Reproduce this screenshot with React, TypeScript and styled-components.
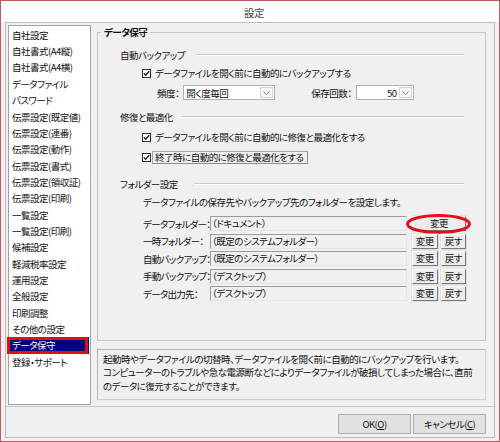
import React from "react";
import styled, { createGlobalStyle } from "styled-components";

const GlobalStyle = createGlobalStyle`
  html, body { margin: 0; padding: 0; background: #fff; }
  body {
    font-family: "Noto Sans CJK JP", "Noto Sans", sans-serif;
    font-size: 9.5px;
    letter-spacing: -0.5px;
    color: #111;
    font-feature-settings: "palt";
  }
  * { box-sizing: border-box; }
`;

const menuItems = [
  "自社設定",
  "自社書式(A4縦)",
  "自社書式(A4横)",
  "データファイル",
  "パスワード",
  "伝票設定(既定値)",
  "伝票設定(連番)",
  "伝票設定(動作)",
  "伝票設定(書式)",
  "伝票設定(領収証)",
  "伝票設定(印刷)",
  "一覧設定",
  "一覧設定(印刷)",
  "候補設定",
  "軽減税率設定",
  "運用設定",
  "全般設定",
  "印刷調整",
  "その他の設定",
  "データ保守",
  "登録・サポート",
];
const SELECTED = 19;

const folders = [
  { label: "データフォルダー：", value: "（ドキュメント）", reset: false },
  { label: "一時フォルダー：", value: "（既定のシステムフォルダー）", reset: true },
  { label: "自動バックアップ：", value: "（既定のシステムフォルダー）", reset: true },
  { label: "手動バックアップ：", value: "（デスクトップ）", reset: true },
  { label: "データ出力先：", value: "（デスクトップ）", reset: true },
];

const Check = () => (
  <CheckBox>
    <svg width="7" height="7" viewBox="0 0 7 7">
      <polyline points="0.8,3.4 2.6,5.3 6.2,1.2" fill="none" stroke="#1a1a1a" strokeWidth="1.3" />
    </svg>
  </CheckBox>
);

const Combo = ({ value, width, right }: { value: string; width: number; right?: boolean }) => (
  <ComboBox style={{ width }}>
    <ComboText $right={right}>{value}</ComboText>
    <ComboArrow>
      <svg width="7" height="4" viewBox="0 0 7 4">
        <polyline points="0.5,0.5 3.5,3.3 6.5,0.5" fill="none" stroke="#6f7d90" strokeWidth="1" />
      </svg>
    </ComboArrow>
  </ComboBox>
);

export default function App() {
  return (
    <>
      <GlobalStyle />
      <Window>
        <TitleBar>設定</TitleBar>
        <Body>
          <Frame>
            <Upper>
              <MenuList>
                {menuItems.map((t, i) => (
                  <MenuItem key={t} $selected={i === SELECTED}>
                    {t}
                    {i === SELECTED && <MarkRect />}
                  </MenuItem>
                ))}
              </MenuList>
              <RightPane>
                <Group>
                  <Legend>データ保守</Legend>
                  <SectionHead $mt={9}>
                    自動バックアップ
                    <Rule $gap={11} />
                  </SectionHead>
                  <CheckRow $mt={4}>
                    <Check />
                    <span>データファイルを開く前に自動的にバックアップする</span>
                  </CheckRow>
                  <ComboRow>
                    <ComboLabel>頻度：</ComboLabel>
                    <Combo value="開く度毎回" width={92} />
                    <ComboLabel $ml={36}>保存回数：</ComboLabel>
                    <Combo value="50" width={58} right />
                  </ComboRow>
                  <SectionHead $mt={10}>
                    修復と最適化
                    <Rule $gap={8} />
                  </SectionHead>
                  <CheckRow $mt={6}>
                    <Check />
                    <span>データファイルを開く前に自動的に修復と最適化をする</span>
                  </CheckRow>
                  <CheckRow $mt={6}>
                    <Check />
                    <FocusText>終了時に自動的に修復と最適化をする</FocusText>
                  </CheckRow>
                  <SectionHead $mt={13}>
                    フォルダー設定
                    <Rule $gap={16} />
                  </SectionHead>
                  <FolderNote>データファイルの保存先やバックアップ先のフォルダーを設定します。</FolderNote>
                  <FolderList>
                    {folders.map((f) => (
                      <FolderRow key={f.label}>
                        <FolderLabel>{f.label}</FolderLabel>
                        <PathField>{f.value}</PathField>
                        {f.reset ? (
                          <SmallButtons>
                            <SmallButton>変更</SmallButton>
                            <SmallButton>戻す</SmallButton>
                          </SmallButtons>
                        ) : (
                          <SmallButtons>
                            <SmallButton $wide>
                              変更
                              <MarkEllipse width="67" height="22" viewBox="0 0 67 22">
                                <ellipse cx="33.5" cy="11" rx="31" ry="8.5" fill="none" stroke="#e3101c" strokeWidth="3" />
                              </MarkEllipse>
                            </SmallButton>
                          </SmallButtons>
                        )}
                      </FolderRow>
                    ))}
                  </FolderList>
                </Group>
                <InfoBox>
                  <div>起動時やデータファイルの切替時、データファイルを開く前に自動的にバックアップを行います。</div>
                  <div>コンピューターのトラブルや急な電源断などによりデータファイルが破損してしまった場合に、直前</div>
                  <div>のデータに復元することができます。</div>
                </InfoBox>
              </RightPane>
            </Upper>
            <ButtonBar>
              <DialogButton>
                OK(<u>O</u>)
              </DialogButton>
              <DialogButton>
                キャンセル(<u>C</u>)
              </DialogButton>
            </ButtonBar>
          </Frame>
        </Body>
      </Window>
    </>
  );
}

const Window = styled.div`
  width: 500px;
  height: 442px;
  border: 1px solid #c4565d;
  display: flex;
  flex-direction: column;
  background: #f0f0f0;
  overflow: hidden;
`;

const TitleBar = styled.div`
  height: 21px;
  background: #fff;
  display: flex;
  align-items: center;
  justify-content: center;
  padding: 1px 0 0 8px;
  font-size: 10.5px;
  color: #444;
`;

const Body = styled.div`
  flex: 1;
  display: flex;
  padding: 0 4px 3px 4px;
  min-height: 0;
`;

const Frame = styled.div`
  flex: 1;
  min-width: 0;
  display: flex;
  flex-direction: column;
  border: 1px solid #bcbcbc;
`;

const Upper = styled.div`
  height: 384px;
  display: flex;
  padding: 2px 8px 0 2px;
  border-bottom: 1px solid #c6c6c6;
`;

const MenuList = styled.div`
  width: 83px;
  flex: none;
  height: 380px;
  background: #fff;
  border: 1px solid #a2a2a2;
  padding-top: 0.8px;
`;

const MenuItem = styled.div<{ $selected?: boolean }>`
  position: relative;
  height: 16.35px;
  line-height: 16.35px;
  padding-left: 3px;
  margin-right: 1px;
  white-space: nowrap;
  background: ${(p) => (p.$selected ? "#000080" : "transparent")};
  color: ${(p) => (p.$selected ? "#fff" : "#111")};
`;

const MarkRect = styled.span`
  position: absolute;
  left: -2px;
  right: 1px;
  top: 0;
  bottom: 0;
  border: 3px solid #ea0a16;
`;

const RightPane = styled.div`
  flex: 1;
  min-width: 0;
  margin-left: 6px;
  display: flex;
  flex-direction: column;
`;

const Group = styled.fieldset`
  margin: 0;
  padding: 0;
  min-width: 0;
  height: 316px;
  border: 1px solid #c6c6c6;
  display: flex;
  flex-direction: column;
`;

const Legend = styled.legend`
  margin-left: 3px;
  padding: 0 3px;
  font-weight: bold;
  line-height: 14px;
`;

const SectionHead = styled.div<{ $mt: number }>`
  display: flex;
  align-items: center;
  height: 14px;
  margin-top: ${(p) => p.$mt}px;
  padding: 0 21px 0 22px;
  white-space: nowrap;
`;

const Rule = styled.div<{ $gap: number }>`
  flex: 1;
  height: 2px;
  margin-left: ${(p) => p.$gap}px;
  border-top: 1px solid #c9c9c9;
  border-bottom: 1px solid #fff;
`;

const CheckRow = styled.div<{ $mt: number }>`
  display: flex;
  align-items: center;
  gap: 4px;
  height: 14px;
  margin-top: ${(p) => p.$mt}px;
  padding-left: 44px;
  white-space: nowrap;
`;

const CheckBox = styled.span`
  width: 9px;
  height: 9px;
  flex: none;
  border: 1px solid #333;
  background: #fff;
  display: flex;
  align-items: center;
  justify-content: center;
`;

const FocusText = styled.span`
  height: 13px;
  line-height: 11px;
  margin-left: -3px;
  padding: 0 3px 0 2px;
  border: 1px solid #8c8c8c;
  border-top-color: #a8a8a8;
  border-left-color: #a8a8a8;
`;

const ComboRow = styled.div`
  display: flex;
  align-items: center;
  height: 15px;
  margin-top: 5px;
  padding-left: 59px;
  white-space: nowrap;
`;

const ComboLabel = styled.span<{ $ml?: number }>`
  margin-left: ${(p) => p.$ml ?? 0}px;
  margin-right: 4px;
`;

const ComboBox = styled.div`
  height: 15px;
  display: flex;
  align-items: center;
  background: #fff;
  border: 1px solid #b0b0b0;
  padding-right: 1px;
`;

const ComboText = styled.span<{ $right?: boolean }>`
  flex: 1;
  padding: 0 2px;
  text-align: ${(p) => (p.$right ? "right" : "left")};
`;

const ComboArrow = styled.span`
  width: 13px;
  height: 11px;
  flex: none;
  border: 1px solid #d4d4d4;
  background: #f7f7f7;
  display: flex;
  align-items: center;
  justify-content: center;
`;

const FolderNote = styled.div`
  height: 14px;
  line-height: 14px;
  margin-top: 4px;
  padding-left: 45px;
  white-space: nowrap;
`;

const FolderList = styled.div`
  display: flex;
  flex-direction: column;
  gap: 2.5px;
  margin-top: 7px;
  padding-left: 45px;
`;

const FolderRow = styled.div`
  display: flex;
  align-items: center;
  height: 15px;
`;

const FolderLabel = styled.span`
  width: 67px;
  flex: none;
  white-space: nowrap;
  letter-spacing: -0.7px;
`;

const PathField = styled.div`
  width: 197px;
  height: 15px;
  line-height: 13px;
  padding-left: 1px;
  white-space: nowrap;
  border: 1px solid;
  border-color: #9c9c9c #e4e4e4 #e4e4e4 #9c9c9c;
  background: #f0f0f0;
`;

const SmallButtons = styled.div`
  display: flex;
  gap: 3px;
  margin-left: 5px;
`;

const SmallButton = styled.div<{ $wide?: boolean }>`
  position: relative;
  width: ${(p) => (p.$wide ? 54 : 25.5)}px;
  height: 15px;
  line-height: 13px;
  text-align: center;
  background: #ececec;
  border: 1px solid;
  border-color: #fff #777 #777 #fff;
  box-shadow: 0 0 0 0.5px #cfcfcf;
`;

const MarkEllipse = styled.svg`
  position: absolute;
  left: -8px;
  top: -4px;
  pointer-events: none;
`;

const InfoBox = styled.div`
  height: 51px;
  margin-top: 8px;
  padding: 2.5px 5px 0;
  line-height: 13.5px;
  white-space: nowrap;
  overflow: hidden;
  border: 1px solid #b4b4b4;
  border-right-color: #d0d0d0;
  border-bottom-color: #d0d0d0;
`;

const ButtonBar = styled.div`
  flex: 1;
  display: flex;
  justify-content: flex-end;
  align-items: flex-start;
  gap: 2px;
  padding: 7px 8px 0 0;
`;

const DialogButton = styled.div`
  width: 73px;
  height: 20px;
  display: flex;
  align-items: center;
  justify-content: center;
  background: #e1e1e1;
  border: 1px solid #adadad;
  white-space: nowrap;

  u {
    text-underline-offset: 1px;
  }
`;
